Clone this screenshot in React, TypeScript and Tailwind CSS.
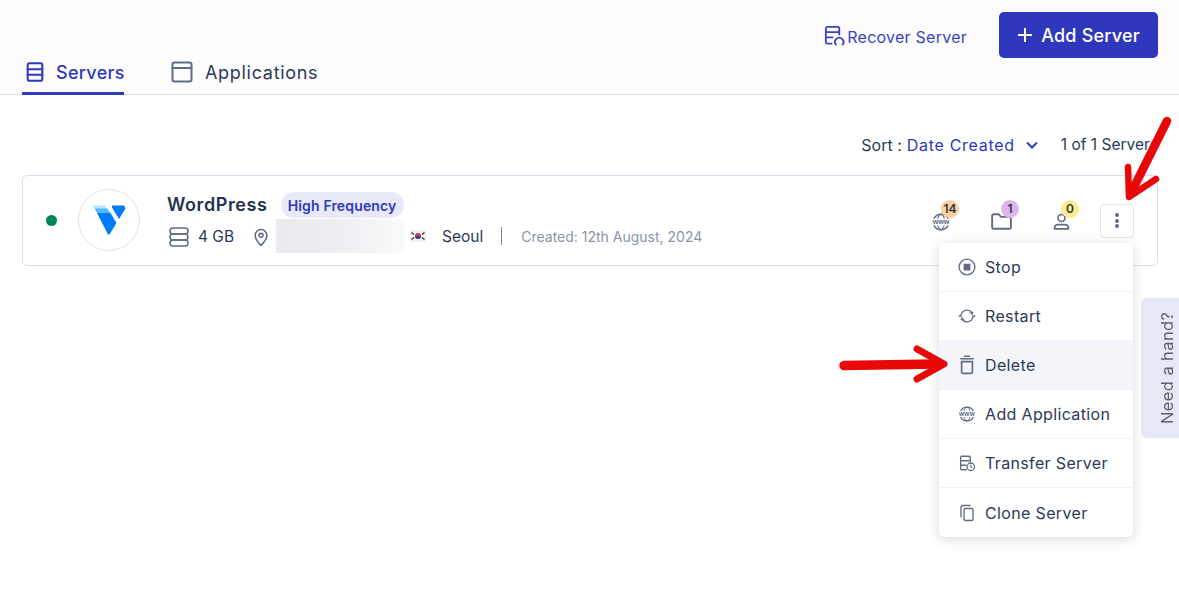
import type { ReactNode } from 'react';

const BLUE = '#2f38bd';

function Icon({ size = 18, className = '', children }: { size?: number; className?: string; children: ReactNode }) {
  return (
    <svg
      width={size}
      height={size}
      viewBox="0 0 24 24"
      fill="none"
      stroke="currentColor"
      strokeWidth="2"
      strokeLinecap="round"
      strokeLinejoin="round"
      className={`shrink-0 ${className}`}
    >
      {children}
    </svg>
  );
}

function WwwIcon({ size = 20 }: { size?: number }) {
  return (
    <svg width={size} height={size} viewBox="0 0 24 24" fill="none" className="shrink-0 text-[#5f6b85]">
      <path d="M3.5 8a9.5 9.5 0 0 1 17 0M3.5 16a9.5 9.5 0 0 0 17 0" stroke="currentColor" strokeWidth="1.7" />
      <path d="M12 2.5c-2.5 1.5-3.6 3.3-4 5.5M12 2.5c2.5 1.5 3.6 3.3 4 5.5M12 21.5c-2.5-1.5-3.6-3.3-4-5.5M12 21.5c2.5-1.5 3.6-3.3 4-5.5" stroke="currentColor" strokeWidth="1.3" />
      <text x="12" y="14.8" textAnchor="middle" fontSize="8.6" fontWeight="700" fill="currentColor" fontFamily="Liberation Sans, sans-serif">www</text>
    </svg>
  );
}

const menuItems: { label: string; active?: boolean; icon: ReactNode }[] = [
  {
    label: 'Stop',
    icon: (
      <Icon>
        <circle cx="12" cy="12" r="10.5" strokeWidth="1.8" />
        <rect x="7.5" y="7.5" width="9" height="9" rx="1" fill="currentColor" stroke="none" />
      </Icon>
    ),
  },
  {
    label: 'Restart',
    icon: (
      <Icon>
        <path d="M4 10.5a8.3 8.3 0 0 1 14.5-3.2M20 13.5a8.3 8.3 0 0 1-14.5 3.2" strokeWidth="1.7" />
        <path d="M20.5 7.2l-1.8 3.2-2.6-2.6zM3.5 16.8l1.8-3.2 2.6 2.6z" fill="currentColor" strokeWidth="0.6" />
        <path d="M1.5 12h3M19.5 12h3" strokeWidth="1.7" />
      </Icon>
    ),
  },
  {
    label: 'Delete',
    active: true,
    icon: (
      <Icon size={20} className="-mx-[1px]">
        <path d="M4.5 4.5h15M9 1.5h6" strokeWidth="1.7" />
        <path d="M5.5 8h13v12.5A1.5 1.5 0 0 1 17 22H7a1.5 1.5 0 0 1-1.5-1.5z" strokeWidth="2" />
      </Icon>
    ),
  },
  { label: 'Add Application', icon: <WwwIcon size={18} /> },
  {
    label: 'Transfer Server',
    icon: (
      <Icon>
        <path d="M11 21H5a1.5 1.5 0 0 1-1.5-1.5v-15A1.5 1.5 0 0 1 5 3h10a1.5 1.5 0 0 1 1.5 1.5V10M3.5 9h13M3.5 15h7" strokeWidth="1.7" />
        <circle cx="17" cy="17" r="5" strokeWidth="1.7" />
        <path d="M17 14.8V17l1.6 1" strokeWidth="1.4" />
      </Icon>
    ),
  },
  {
    label: 'Clone Server',
    icon: (
      <Icon>
        <path d="M4 17V4a2 2 0 0 1 2-2h10" strokeWidth="1.8" />
        <rect x="8" y="6" width="12" height="16" rx="2" strokeWidth="1.8" />
      </Icon>
    ),
  },
];

function CountIcon({ count, color, children }: { count: number; color: string; children: ReactNode }) {
  return (
    <div className="relative flex h-5 w-5 items-center justify-center text-[#5f6b85]">
      {children}
      <span className={`absolute -top-[12px] left-[10px] flex h-[18px] w-[18px] items-center justify-center rounded-full text-[12px] font-semibold text-[#2d3548] ${color}`}>
        {count}
      </span>
    </div>
  );
}

export default function App() {
  return (
    <div className="relative h-[592px] w-[1179px] overflow-hidden bg-white font-['Inter',sans-serif] text-[#2c3a57]">
      <header className="border-b border-[#e0e0ea] bg-[#fcfcfd] pt-3 pr-[21px] pl-[22px]">
        <div className="flex h-[46px] items-center justify-end">
          <a className="flex items-center gap-[2px] pt-[3px] text-[16px] tracking-[0.25px] text-[#3a43c4]">
            <Icon size={23} className="-mt-[3px]">
              <path d="M10 20.5H5.5A1.5 1.5 0 0 1 4 19V4.5A1.5 1.5 0 0 1 5.5 3h11A1.5 1.5 0 0 1 18 4.5V11M4 8.5h14M4 14h7" strokeWidth="1.9" />
              <path d="M14.5 21.5a4.4 4.4 0 1 1 7 0" strokeWidth="1.9" />
            </Icon>
            Recover Server
          </a>
          <button className="ml-[32px] flex h-[46px] w-[159px] items-center justify-center gap-2 rounded-[5px] bg-[#2f38bd] text-[18px] font-medium tracking-[0.2px] text-white">
            <svg width="16" height="16" viewBox="0 0 16 16" stroke="currentColor" strokeWidth="2">
              <path d="M8 1v14M1 8h14" />
            </svg>
            Add Server
          </button>
        </div>
        <nav className="flex">
          <div className="-mb-px flex h-[37px] w-[102px] items-start gap-[12px] border-b-[3px] border-[#2f38bd] pt-[1px] pl-[4px] text-[18px] font-medium leading-7 tracking-[0.3px] text-[#2f38bd]">
            <Icon size={22} className="mt-[2px] -mr-[2px] -ml-[2px]">
              <rect x="4" y="2.5" width="16" height="19" rx="2" strokeWidth="2.2" />
              <path d="M4 9h16M4 15h16" strokeWidth="2.2" />
            </Icon>
            Servers
          </div>
          <div className="ml-[46px] flex h-[36px] items-start gap-[11px] pt-[1px] text-[18px] leading-7 tracking-[0.7px] text-[#2c3a57]">
            <Icon size={24} className="mt-[1px] text-[#5f6b85]">
              <rect x="2.5" y="2.5" width="19" height="19" rx="2" strokeWidth="2" />
              <path d="M2.5 8h19" strokeWidth="2" />
            </Icon>
            Applications
          </div>
        </nav>
      </header>

      <main className="pr-[21px] pl-[22px]">
        <div className="flex h-[80px] items-center justify-end pt-[20px] text-[16px] whitespace-nowrap">
          <span>Sort :</span>
          <span className="ml-[5px] tracking-[0.7px]" style={{ color: BLUE }}>Date Created</span>
          <svg width="12" height="8" viewBox="0 0 12 8" fill="none" stroke={BLUE} strokeWidth="2" className="ml-[11px]">
            <path d="M1 1.5l5 5 5-5" />
          </svg>
          <span className="ml-[23px] text-[15.5px]">1 of 1 Servers</span>
        </div>

        <section className="flex h-[91px] items-center rounded-[5px] border border-[#dcdcf0] bg-white pr-[23px] pl-[23px]">
          <span className="h-[11px] w-[11px] rounded-full bg-[#00875a]" />
          <div className="ml-[21px] -mt-[1px] flex h-[62px] w-[62px] items-center justify-center rounded-full border border-[#e2e2e8]">
            <svg width="34" height="30" viewBox="0 0 34 30" className="-ml-[1px]">
              <path d="M0.5 0.5h12.5l2.5 4H3z" fill="#b5e6fc" />
              <path d="M2.5 3.5h13l3 5H5.5z" fill="#51b9ff" />
              <path d="M5 8h13.5l6 10-7 11.5h-1.5z" fill="#007bfc" />
              <path d="M20 0.5h12l1.5 3-6.5 10.5-7-11.5z" fill="#007bfc" />
            </svg>
          </div>
          <div className="ml-[27px] flex flex-col pt-[4px]">
            <div className="flex h-[26px] items-center">
              <span className="text-[18px] leading-none font-semibold tracking-[0.6px] text-[#25324f]">WordPress</span>
              <span className="ml-[13px] flex h-[26px] w-[123px] items-center justify-center rounded-full bg-[#e8e9f8] text-[14px] font-semibold tracking-[0.15px] text-[#2f38bd]">
                High Frequency
              </span>
            </div>
            <div className="flex h-[35px] items-center pt-[3px] text-[15.5px]">
              <Icon size={24} className="text-[#5f6b85]">
                <rect x="3" y="3" width="18" height="6" rx="3" strokeWidth="1.5" />
                <rect x="3" y="9" width="18" height="6" rx="3" strokeWidth="1.5" />
                <rect x="3" y="15" width="18" height="6" rx="3" strokeWidth="1.5" />
              </Icon>
              <span className="ml-[7px] w-[53px]">4 GB</span>
              <Icon size={20} className="text-[#5f6b85]">
                <path d="M19 10c0 5.5-7 12-7 12s-7-6.5-7-12a7 7 0 0 1 14 0z" strokeWidth="1.9" />
                <circle cx="12" cy="10" r="2.4" strokeWidth="1.9" />
              </Icon>
              <div className="ml-[5px] -mt-[2px] h-[34px] w-[128px] bg-gradient-to-r from-[#e9e9ee] via-[#eeeef2] to-[#fafafc]" />
              <svg width="18" height="18" viewBox="0 0 18 18" className="ml-[5px] -mt-[2px] shrink-0 blur-[0.4px]">
                <rect x="1" y="3" width="16" height="12" fill="#f1f1f3" />
                <circle cx="9" cy="9" r="3" fill="#d4344b" />
                <path d="M6 9a3 3 0 0 0 6 0z" fill="#2c4a9c" />
                <path d="M2.5 5.5l2.5 2M13 7.5l2.5-2M2.5 12.5l2.5-2M13 10.5l2.5 2" stroke="#333" strokeWidth="1.3" />
              </svg>
              <span className="ml-[15px]">Seoul</span>
              <span className="mr-[19px] ml-[18px] -mt-[2px] h-[18px] w-px bg-[#7d8598]" />
              <span className="-mt-[2px] text-[14px] text-[#8b93a7]">Created: 12th August, 2024</span>
            </div>
          </div>

          <div className="ml-auto flex items-center">
            <div className="flex items-center gap-[40px] pt-[2px]">
              <CountIcon count={14} color="bg-[#fbcf9b]"><WwwIcon /></CountIcon>
              <CountIcon count={1} color="bg-[#dcb6ea]">
                <Icon size={25}>
                  <path d="M3 17.5V6.5A1.5 1.5 0 0 1 4.5 5h4.6l2.4 2.5h8A1.5 1.5 0 0 1 21 9v8.5a1.5 1.5 0 0 1-1.5 1.5h-15A1.5 1.5 0 0 1 3 17.5z" strokeWidth="1.8" />
                </Icon>
              </CountIcon>
              <CountIcon count={0} color="bg-[#fdec8e]">
                <Icon size={21}>
                  <circle cx="12" cy="8" r="4" strokeWidth="1.9" />
                  <path d="M4 20.5v-1.2c0-2 1.5-3.3 3.5-3.8h9c2 .5 3.5 1.8 3.5 3.8v1.2z" strokeWidth="1.9" />
                </Icon>
              </CountIcon>
            </div>
            <button className="ml-[29px] flex h-[34px] w-[34px] flex-col items-center justify-center gap-[1.5px] rounded-[4px] border border-[#e2e2e8] bg-white">
              <span className="h-1 w-1 rounded-full bg-[#5f6b85]" />
              <span className="h-1 w-1 rounded-full bg-[#5f6b85]" />
              <span className="h-1 w-1 rounded-full bg-[#5f6b85]" />
            </button>
          </div>
        </section>
      </main>

      <ul className="absolute top-[243px] left-[939px] w-[194px] divide-y divide-[#f1f1f5] rounded-[5px] bg-white shadow-[0_2px_12px_rgba(60,64,90,0.2)]">
        {menuItems.map((item) => (
          <li
            key={item.label}
            className={`flex h-[49px] items-center gap-[9px] pl-[19px] text-[16px] tracking-[0.35px] ${item.active ? 'bg-[#f4f5fb]' : ''}`}
          >
            <span className="flex text-[#5f6b85]">{item.icon}</span>
            {item.label}
          </li>
        ))}
      </ul>

      <div className="absolute top-[298px] right-0 flex h-[140px] w-[38px] rotate-180 items-center justify-center rounded-r-[5px] bg-[#e6e8f6] pr-[14px] text-[16.5px] tracking-[0.4px] text-[#5a6478] [writing-mode:vertical-rl]">
        Need a hand?
      </div>

      <svg width="50" height="90" viewBox="0 0 50 90" fill="none" stroke="#e80808" strokeLinecap="round" strokeLinejoin="round" className="absolute top-[113px] left-[1122px]">
        <path d="M45 8L11 76" strokeWidth="8.5" />
        <path d="M6 54l1 30 27-18" strokeWidth="6.5" />
      </svg>
      <svg width="115" height="40" viewBox="0 0 115 40" fill="none" stroke="#e80808" strokeLinecap="round" strokeLinejoin="round" className="absolute top-[345px] left-[836px]">
        <path d="M8 20.5L100 19" strokeWidth="9.5" />
        <path d="M81 4l27 15-27 15" strokeWidth="7" />
      </svg>
    </div>
  );
}
